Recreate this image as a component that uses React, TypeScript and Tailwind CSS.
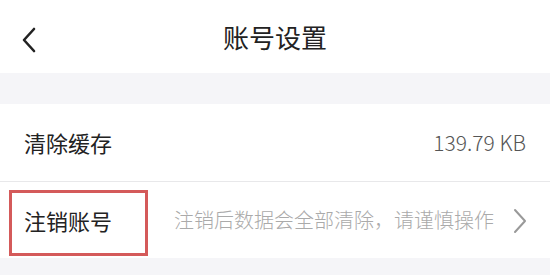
import React from 'react';

const font = { fontFamily: '"Noto Sans CJK SC", "Noto Sans", sans-serif' };

const BackIcon = () => (
  <svg width="16" height="26" viewBox="0 0 16 26" fill="none">
    <path d="M13 2 L3 13 L13 24" stroke="#222" strokeWidth="2.6" strokeLinecap="round" strokeLinejoin="round" />
  </svg>
);

const ChevronRight = () => (
  <svg width="16" height="26" viewBox="0 0 16 26" fill="none">
    <path d="M3 2 L13 13 L3 24" stroke="#999" strokeWidth="2" strokeLinecap="round" strokeLinejoin="round" />
  </svg>
);

export default function App() {
  return (
    <div className="w-[550px] h-[275px] bg-[#f5f5f8] overflow-hidden" style={font}>
      {/* header */}
      <div className="relative h-[73px] bg-white flex items-center justify-center">
        <div className="absolute left-[21px] top-[27px]">
          <BackIcon />
        </div>
        <span className="text-[26px] text-[#222] leading-none">账号设置</span>
      </div>

      <div className="h-[31px]" />

      <div className="bg-white">
        <div className="h-[78px] flex items-center justify-between pl-[24px] pr-[24px] border-b border-[#e8e8ea]">
          <span className="text-[22px] text-[#222]">清除缓存</span>
          <span className="text-[21px] text-[#555] font-light">139.79 KB</span>
        </div>
        <div className="relative h-[76px] flex items-center pl-[24px] pr-[22px]">
          <span className="text-[22px] text-[#222]">注销账号</span>
          <span className="ml-auto text-[20px] text-[#aaa] font-light">注销后数据会全部清除，请谨慎操作</span>
          <div className="ml-[18px] mt-[1px]">
            <ChevronRight />
          </div>
          <div className="absolute left-[9px] top-[8px] w-[139px] h-[66px] border-[3px] border-[#d45a5a]" />
        </div>
      </div>
    </div>
  );
}
